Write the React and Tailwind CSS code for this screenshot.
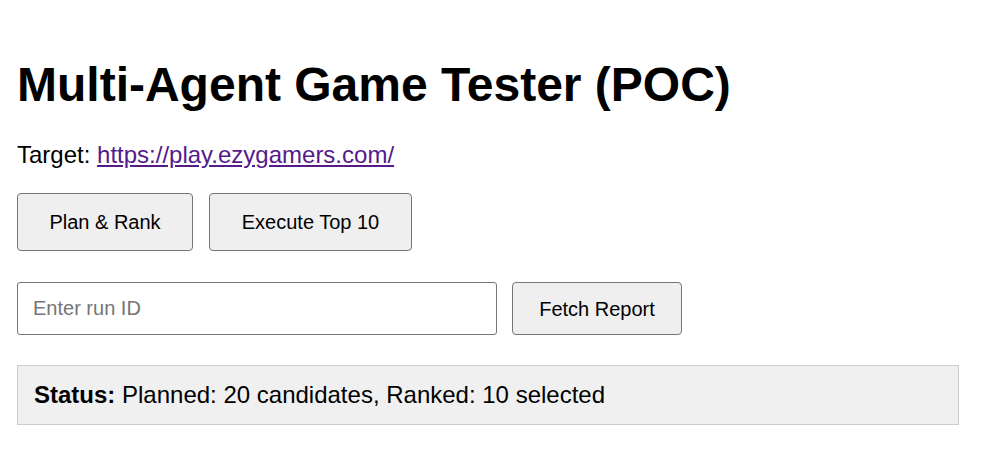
export default function App() {
  return (
    <div className="min-h-screen bg-white px-[17px] pt-[57px] text-black" style={{ fontFamily: '"Liberation Sans", Arial, sans-serif' }}>
      <h1 className="m-0 text-[48px] font-bold leading-[56px]">Multi-Agent Game Tester (POC)</h1>
      <p className="mt-[28px] text-[24px] leading-[28px]">
        Target:{" "}
        <a href="#" className="text-[#551a8b] underline">https://play.ezygamers.com/</a>
      </p>
      <div className="mt-[24px] flex gap-[16px]">
        <button className="h-[58px] w-[176px] rounded-[4px] border border-[#767676] bg-[#efefef] text-[20px] text-black">Plan &amp; Rank</button>
        <button className="h-[58px] w-[203px] rounded-[4px] border border-[#767676] bg-[#efefef] text-[20px] text-black">Execute Top 10</button>
      </div>
      <div className="mt-[31px] flex gap-[15px]">
        <input
          placeholder="Enter run ID"
          className="h-[53px] w-[480px] rounded-[3px] border border-[#767676] px-[15px] text-[20px] placeholder:text-[#757575] outline-none"
        />
        <button className="h-[53px] w-[170px] rounded-[4px] border border-[#767676] bg-[#efefef] text-[20px] text-black">Fetch Report</button>
      </div>
      <div className="mt-[30px] flex h-[60px] w-[942px] items-center border border-[#cccccc] bg-[#f0f0f0] px-[16px] text-[24px]">
        <span><b>Status:</b> Planned: 20 candidates, Ranked: 10 selected</span>
      </div>
    </div>
  );
}
